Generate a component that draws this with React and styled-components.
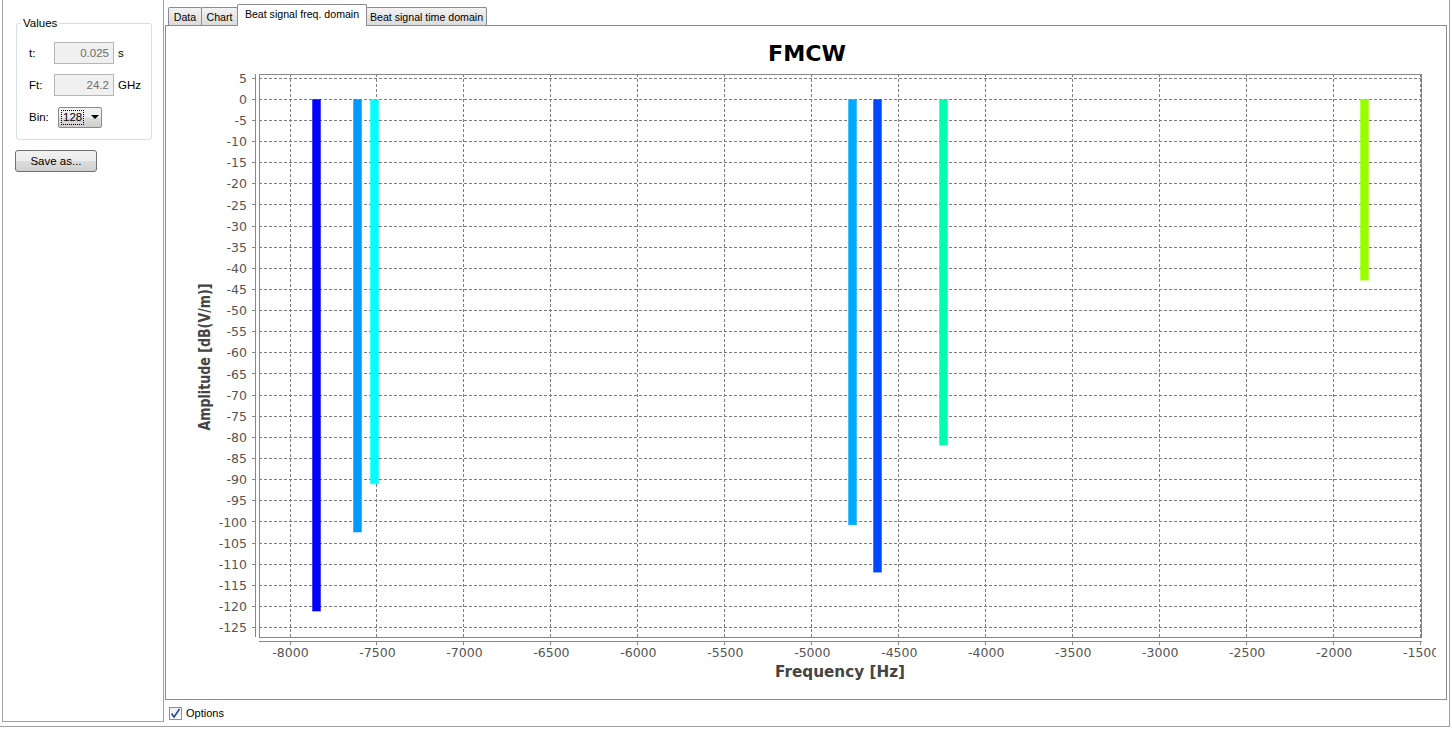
import React from "react";
import styled, { createGlobalStyle } from "styled-components";

const GlobalStyle = createGlobalStyle`
	html, body {
		margin: 0;
		padding: 0;
		background: #fff;
	}
	body {
		font-family: "Liberation Sans", Arial, sans-serif;
		font-size: 11px;
		color: #000;
	}
`;

// chart scales, in page pixels
const X0 = 290;
const XS = 86.97 / 500;
const Y0 = 99.3;
const YS = 21.13 / 5;
const fx = (f) => X0 + (f + 8000) * XS;
const fy = (a) => Y0 - a * YS;

const PLOT = { left: 259, right: 1421, top: 74, bottom: 637 };

const bars = [
	{ f: -7848, a: -121.1, color: "#0000ff" },
	{ f: -7612, a: -102.4, color: "#0099ff" },
	{ f: -7517, a: -91.0, color: "#00ffff" },
	{ f: -4767, a: -100.7, color: "#00aaff" },
	{ f: -4623, a: -111.9, color: "#0048ff" },
	{ f: -4243, a: -81.8, color: "#00ffb0" },
	{ f: -1823, a: -42.8, color: "#99ff00" },
];

const xTicks = [];
for (let f = -8000; f <= -1500; f += 500) xTicks.push(f);
const yTicks = [];
for (let a = 5; a >= -125; a -= 5) yTicks.push(a);

const px = (v) => Math.floor(v) + 0.5;

function BeatChart() {
	return (
		<ChartSvg viewBox="166 26 1280 673" width="1280" height="673">
			<defs>
				<clipPath id="chartArea">
					<rect x="166" y="26" width="1270" height="673" />
				</clipPath>
			</defs>
			<g clipPath="url(#chartArea)">
				<ChartTitle x="807" y="61" textAnchor="middle" textLength="78" lengthAdjust="spacingAndGlyphs">
					FMCW
				</ChartTitle>

				{yTicks.map((a) => (
					<line
						key={"gy" + a}
						x1={PLOT.left}
						x2={PLOT.right}
						y1={px(fy(a))}
						y2={px(fy(a))}
						stroke="#7d7d7d"
						strokeDasharray="3 2"
					/>
				))}
				{xTicks.map((f) => (
					<line
						key={"gx" + f}
						x1={px(fx(f))}
						x2={px(fx(f))}
						y1={PLOT.top}
						y2={PLOT.bottom}
						stroke="#7d7d7d"
						strokeDasharray="3 2"
					/>
				))}

				<rect
					x={PLOT.left + 0.5}
					y={PLOT.top + 0.5}
					width={PLOT.right - PLOT.left}
					height={PLOT.bottom - PLOT.top}
					fill="none"
					stroke="#888"
				/>

				{bars.map((b) => {
					const x = Math.floor(fx(b.f)) - 4 + 0.5;
					const y2 = fy(b.a);
					return (
						<rect
							key={b.f}
							x={x}
							y={99.5}
							width={8}
							height={y2 - 99.5}
							fill={b.color}
							stroke={b.color}
							strokeOpacity={0.45}
						/>
					);
				})}

				{/* y axis */}
				<line x1={255.5} x2={255.5} y1={PLOT.top} y2={PLOT.bottom} stroke="#888" />
				{yTicks.map((a) => (
					<g key={"ty" + a}>
						<line x1={252} x2={255} y1={px(fy(a))} y2={px(fy(a))} stroke="#888" />
						<TickText x="247" y={fy(a) + 4.6} textAnchor="end">
							{a}
						</TickText>
					</g>
				))}

				{/* x axis */}
				<line x1={PLOT.left} x2={PLOT.right + 1} y1={641.5} y2={641.5} stroke="#888" />
				{xTicks.map((f) => (
					<g key={"tx" + f}>
						<line x1={px(fx(f))} x2={px(fx(f))} y1={642} y2={645} stroke="#888" />
						<TickText x={fx(f) + 0.5} y="657" textAnchor="middle">
							{f}
						</TickText>
					</g>
				))}

				<AxisLabel x="840" y="676.5" textAnchor="middle" textLength="130" lengthAdjust="spacingAndGlyphs">
					Frequency [Hz]
				</AxisLabel>
				<AxisLabel
					x="0"
					y="0"
					textAnchor="middle"
					textLength="147"
					lengthAdjust="spacingAndGlyphs"
					transform="translate(210 357) rotate(-90)"
				>
					Amplitude [dB(V/m)]
				</AxisLabel>
			</g>
		</ChartSvg>
	);
}

export default function App() {
	return (
		<>
			<GlobalStyle />
			<Frame>
				<LeftPanel>
					<GroupBox>
						<GroupTitle>Values</GroupTitle>
						<FieldRow>
							<FieldLabel>t:</FieldLabel>
							<TextField>0.025</TextField>
							<Unit>s</Unit>
						</FieldRow>
						<FieldRow>
							<FieldLabel>Ft:</FieldLabel>
							<TextField>24.2</TextField>
							<Unit>GHz</Unit>
						</FieldRow>
						<FieldRow>
							<FieldLabel>Bin:</FieldLabel>
							<Combo>
								<ComboValue>128</ComboValue>
								<ComboArrow />
							</Combo>
						</FieldRow>
					</GroupBox>
					<Button>Save as...</Button>
				</LeftPanel>

				<RightArea>
					<TabStrip>
						<Tab $w={34}>Data</Tab>
						<Tab $w={37}>Chart</Tab>
						<Tab $w={130} $active>
							Beat signal freq. domain
						</Tab>
						<Tab $w={121}>Beat signal time domain</Tab>
					</TabStrip>
					<Pane>
						<BeatChart />
					</Pane>
					<OptionsRow>
						<CheckBox>
							<svg width="11" height="11" viewBox="0 0 11 11">
								<path d="M1.5 5.5 L4 9 L9.5 1" fill="none" stroke="#2a4a9c" strokeWidth="1.6" />
							</svg>
						</CheckBox>
						<span>Options</span>
					</OptionsRow>
				</RightArea>
			</Frame>
		</>
	);
}

const Frame = styled.div`
	box-sizing: border-box;
	width: 1450px;
	height: 727px;
	display: flex;
	border-right: 1px solid #a0a0a0;
	border-bottom: 1px solid #a0a0a0;
`;

const LeftPanel = styled.div`
	box-sizing: border-box;
	margin-left: 2px;
	width: 162px;
	height: 722px;
	border: 1px solid #a0a0a0;
	border-top: none;
	display: flex;
	flex-direction: column;
	align-items: flex-start;
	padding: 23px 0 0 13px;
	font-size: 11.5px;
`;

const GroupBox = styled.div`
	position: relative;
	box-sizing: border-box;
	width: 136px;
	height: 117px;
	border: 1px solid #d5dfe5;
	border-radius: 3px;
	padding: 18px 0 0 12px;
	display: flex;
	flex-direction: column;
	gap: 10px;
`;

const GroupTitle = styled.span`
	position: absolute;
	top: -7px;
	left: 4px;
	padding: 0 2px;
	background: #fff;
	line-height: 13px;
`;

const FieldRow = styled.div`
	display: flex;
	align-items: center;
	height: 22px;
`;

const FieldLabel = styled.span`
	width: 25px;
`;

const TextField = styled.div`
	box-sizing: border-box;
	width: 60px;
	height: 22px;
	border: 1px solid #b4b6bb;
	background: #f0f0f0;
	color: #6d6d6d;
	text-align: right;
	padding-right: 4px;
	line-height: 20px;
`;

const Unit = styled.span`
	margin-left: 4px;
`;

const Combo = styled.div`
	box-sizing: border-box;
	margin-left: 4px;
	width: 44px;
	height: 21px;
	border: 1px solid #8a8a8a;
	border-radius: 2px;
	background: linear-gradient(#f3f3f3, #ebebeb 50%, #dddddd 50%, #cfcfcf);
	display: flex;
	align-items: center;
	padding-left: 2px;
`;

const ComboValue = styled.span`
	box-sizing: border-box;
	height: 15px;
	line-height: 13px;
	padding: 0 1px;
	border: 1px dotted #000;
`;

const ComboArrow = styled.span`
	margin-left: 7px;
	width: 0;
	height: 0;
	border-left: 4px solid transparent;
	border-right: 4px solid transparent;
	border-top: 4px solid #000;
`;

const Button = styled.div`
	box-sizing: border-box;
	margin: 10px 0 0 -1px;
	width: 82px;
	height: 22px;
	border: 1px solid #707070;
	border-radius: 3px;
	background: linear-gradient(#f2f2f2, #ebebeb 50%, #dddddd 50%, #cfcfcf);
	display: flex;
	align-items: center;
	justify-content: center;
`;

const RightArea = styled.div`
	margin-left: 1px;
	width: 1282px;
	display: flex;
	flex-direction: column;
`;

const TabStrip = styled.div`
	height: 25px;
	display: flex;
	align-items: flex-end;
	padding-left: 3px;
`;

const Tab = styled.div`
	position: relative;
	box-sizing: border-box;
	width: ${(p) => p.$w}px;
	height: ${(p) => (p.$active ? 22 : 18)}px;
	margin-bottom: ${(p) => (p.$active ? -1 : 0)}px;
	margin-left: -1px;
	&:first-child {
		margin-left: 0;
	}
	z-index: ${(p) => (p.$active ? 2 : 1)};
	border: 1px solid #898c95;
	border-bottom: none;
	border-radius: 2px 2px 0 0;
	background: ${(p) => (p.$active ? "#fff" : "linear-gradient(#f2f2f2, #e6e6e6 50%, #dcdcdc)")};
	display: flex;
	justify-content: center;
	padding-top: 3px;
	font-size: 10.6px;
	white-space: nowrap;
`;

const Pane = styled.div`
	box-sizing: border-box;
	height: 675px;
	border: 1px solid #898c95;
	background: #fff;
	overflow: hidden;
`;

const ChartSvg = styled.svg`
	display: block;
`;

const ChartTitle = styled.text`
	font-family: "DejaVu Sans", sans-serif;
	font-weight: bold;
	font-size: 21px;
	fill: #000;
`;

const TickText = styled.text`
	font-family: "DejaVu Sans", sans-serif;
	font-size: 12.5px;
	fill: #555;
`;

const AxisLabel = styled.text`
	font-family: "DejaVu Sans", sans-serif;
	font-weight: bold;
	font-size: 15px;
	fill: #444;
`;

const OptionsRow = styled.div`
	height: 26px;
	display: flex;
	align-items: center;
	padding-left: 4px;
	gap: 4px;
`;

const CheckBox = styled.div`
	box-sizing: border-box;
	width: 13px;
	height: 13px;
	border: 1px solid #8e8f8f;
	background: linear-gradient(#f0f0f0, #fdfdfd);
	display: flex;
	align-items: center;
	justify-content: center;
`;
